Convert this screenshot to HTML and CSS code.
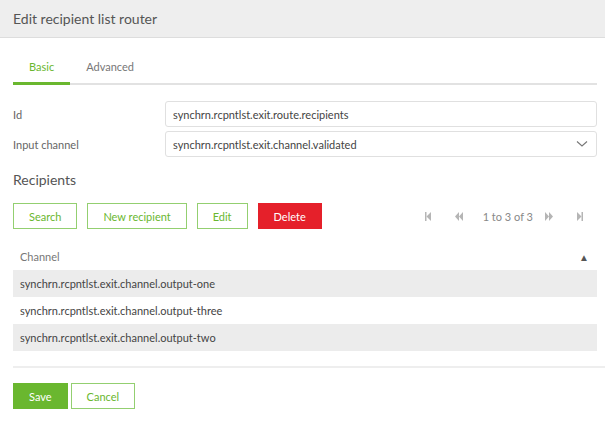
FILE: index.html
```html
<!DOCTYPE html>
<html lang="en">
<head>
    <meta charset="UTF-8">
    <title>Edit recipient list router</title>
    <link rel="stylesheet" href="styles.css">
</head>
<body>
<div class="dialog-header">Edit recipient list router</div>
<div class="dialog-body">
    <div class="tabs">
        <div class="tab active">Basic</div>
        <div class="tab">Advanced</div>
    </div>
    <div class="form">
        <div class="form-row">
            <label for="routerId">Id</label>
            <input type="text" id="routerId" value="synchrn.rcpntlst.exit.route.recipients">
        </div>
        <div class="form-row">
            <label for="inputChannel">Input channel</label>
            <div class="select">
                <span>synchrn.rcpntlst.exit.channel.validated</span>
                <svg width="12" height="8" viewBox="0 0 12 8"><path d="M1 1.5 L6 6 L11 1.5" fill="none" stroke="#777" stroke-width="1.1"/></svg>
            </div>
        </div>
    </div>
    <h2 class="section-title">Recipients</h2>
    <div class="toolbar">
        <div class="actions">
            <button class="btn">Search</button>
            <button class="btn">New recipient</button>
            <button class="btn">Edit</button>
            <button class="btn btn-danger">Delete</button>
        </div>
        <div class="pager">
            <svg width="6" height="9" viewBox="0 0 6 9"><rect x="0" y="0" width="1.5" height="9" fill="#b5b5b5"/><path d="M6 0 L1.5 4.5 L6 9 Z" fill="#b5b5b5"/></svg>
            <svg class="pager-prev" width="8" height="9" viewBox="0 0 8 9"><path d="M4 0 L0 4.5 L4 9 Z M8 0 L4 4.5 L8 9 Z" fill="#b5b5b5"/></svg>
            <span class="pager-text">1 to 3 of 3</span>
            <svg class="pager-next" width="8" height="9" viewBox="0 0 8 9"><path d="M0 0 L4 4.5 L0 9 Z M4 0 L8 4.5 L4 9 Z" fill="#b5b5b5"/></svg>
            <svg class="pager-last" width="6" height="9" viewBox="0 0 6 9"><path d="M0 0 L4.5 4.5 L0 9 Z" fill="#b5b5b5"/><rect x="4.5" y="0" width="1.5" height="9" fill="#b5b5b5"/></svg>
        </div>
    </div>
    <div class="grid">
        <div class="grid-head">
            <span>Channel</span>
            <span class="sort">&#9650;</span>
        </div>
        <div class="grid-row odd">synchrn.rcpntlst.exit.channel.output-one</div>
        <div class="grid-row">synchrn.rcpntlst.exit.channel.output-three</div>
        <div class="grid-row odd">synchrn.rcpntlst.exit.channel.output-two</div>
    </div>
</div>
<div class="dialog-footer">
    <button class="btn btn-primary">Save</button>
    <button class="btn">Cancel</button>
</div>
</body>
</html>
```

FILE: styles.css
```css
body {
    margin: 0;
    width: 605px;
    background: #FFFFFF;
    font-family: Lato, sans-serif;
    font-size: 11px;
    color: #444444;
}

.dialog-header {
    height: 37px;
    display: flex;
    align-items: center;
    padding-left: 13px;
    background: #EEEEEE;
    border-bottom: 1px solid #DDDDDD;
    font-size: 14px;
    color: #555555;
}

.dialog-body {
    padding: 0 8px 0 13px;
}

.tabs {
    display: flex;
    margin-top: 13px;
    border-bottom: 2px solid #E2E2E2;
}

.tab {
    height: 32px;
    line-height: 32px;
    padding: 0 16px;
    color: #777777;
}

.tab.active {
    color: #6AB72F;
    border-bottom: 3px solid #6AB72F;
    margin-bottom: -2px;
    height: 31px;
    line-height: 31px;
}

.form {
    margin-top: 16px;
    display: flex;
    flex-direction: column;
    gap: 4px;
}

.form-row {
    display: flex;
    align-items: center;
}

.form-row label {
    width: 152px;
    color: #666666;
}

.form-row input,
.select {
    flex: 1;
    box-sizing: border-box;
    height: 26px;
    padding: 0 7px;
    border: 1px solid #E0E0E0;
    border-radius: 3px;
    font-family: Lato, sans-serif;
    font-size: 11px;
    color: #444444;
}

.select {
    display: flex;
    align-items: center;
    justify-content: space-between;
    padding-right: 8px;
}

.section-title {
    margin: 13px 0 0;
    font-size: 14px;
    font-weight: 400;
    line-height: 20px;
    color: #555555;
}

.toolbar {
    display: flex;
    justify-content: space-between;
    align-items: center;
    margin-top: 13px;
}

.actions {
    display: flex;
    gap: 10px;
}

.btn {
    height: 26px;
    padding: 0 15px;
    background: #FFFFFF;
    border: 1px solid #93CF70;
    color: #6AB72F;
    font-family: Lato, sans-serif;
    font-size: 11px;
    cursor: pointer;
}

.btn-danger {
    background: #E5202A;
    border-color: #E5202A;
    color: #FFFFFF;
}

.btn-primary {
    background: #6AB72F;
    border-color: #6AB72F;
    color: #FFFFFF;
}

.pager {
    display: flex;
    align-items: center;
    padding-right: 14px;
    color: #888888;
}

.pager-prev {
    margin-left: 24px;
}

.pager-text {
    margin-left: 20px;
}

.pager-next {
    margin-left: 12px;
}

.pager-last {
    margin-left: 24px;
}

.grid {
    margin-top: 14px;
}

.grid-head {
    height: 27px;
    display: flex;
    align-items: center;
    justify-content: space-between;
    padding: 0 8px 0 7px;
    color: #777777;
}

.sort {
    font-size: 10px;
    color: #555555;
}

.grid-row {
    height: 27px;
    line-height: 27px;
    padding-left: 7px;
    color: #444444;
}

.grid-row.odd {
    background: #ECECEC;
}

.dialog-footer {
    margin: 15px 0 0 13px;
    padding-top: 15px;
    border-top: 2px solid #EEEEEE;
    display: flex;
    gap: 3px;
}
```
